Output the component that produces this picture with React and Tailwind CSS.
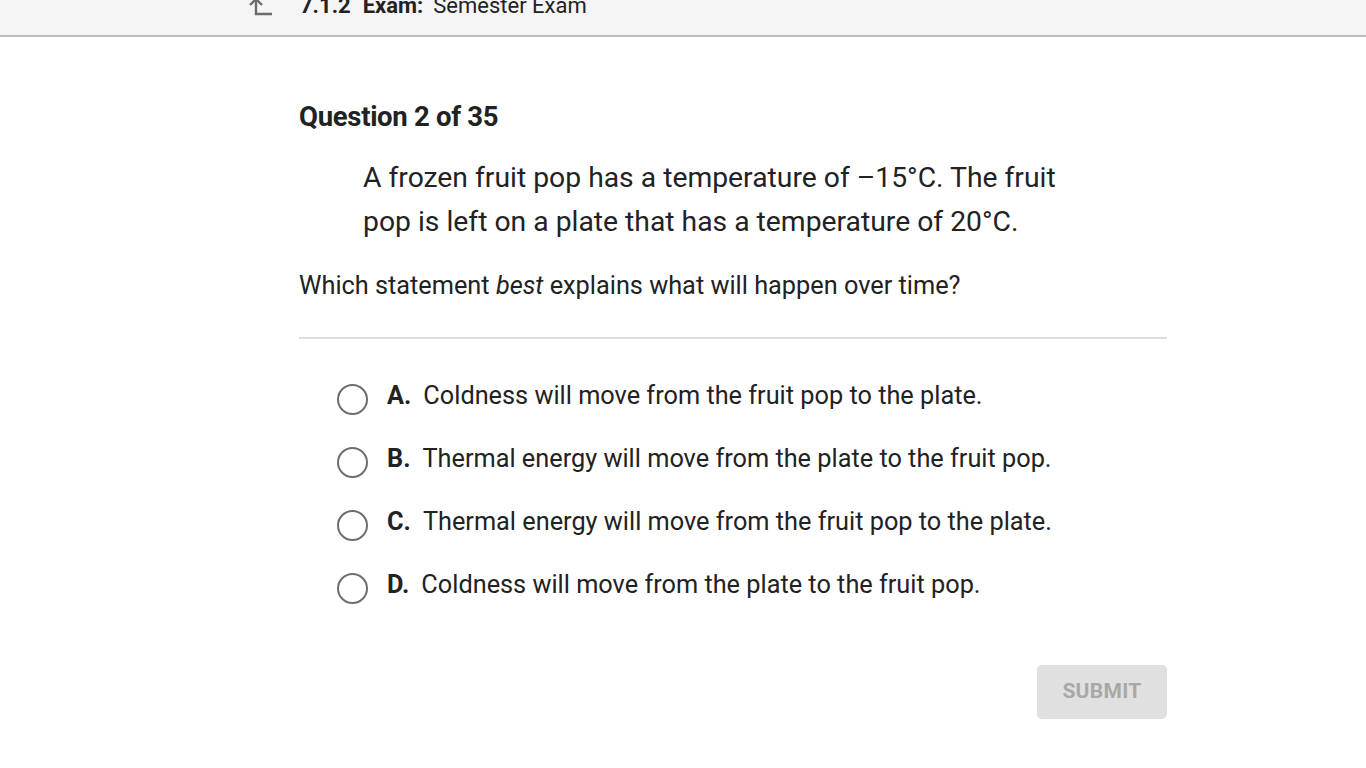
import React from 'react';

const options = [
  { letter: 'A.', text: 'Coldness will move from the fruit pop to the plate.' },
  { letter: 'B.', text: 'Thermal energy will move from the plate to the fruit pop.' },
  { letter: 'C.', text: 'Thermal energy will move from the fruit pop to the plate.' },
  { letter: 'D.', text: 'Coldness will move from the plate to the fruit pop.' },
];

function BackIcon() {
  return (
    <svg width="30" height="30" viewBox="0 0 30 30" fill="none" stroke="#6b6b6b" strokeWidth="2.4">
      <path d="M11 8V23H27" />
      <path d="M5 14L11 8L17 14" />
    </svg>
  );
}

export default function App() {
  return (
    <div className="min-h-screen bg-white text-[#222] font-['Roboto',sans-serif]">
      <header className="h-[37px] bg-[#f5f5f5] border-b-2 border-[#bdbdbd] overflow-hidden">
        <div className="flex items-center h-[40px] -mt-[14px] pl-[245px] gap-[25px]">
          <BackIcon />
          <div className="flex items-center text-[22px] leading-none">
            <span className="font-bold mr-[12px]">7.1.2</span>
            <span className="font-bold mr-[10px]">Exam:</span>
            <span>Semester Exam</span>
          </div>
        </div>
      </header>

      <main className="w-[868px] ml-[299px] pt-[62px]">
        <h1 className="text-[27.5px] font-bold leading-[36px] tracking-[-0.3px]">Question 2 of 35</h1>

        <p className="mt-[21px] ml-[64px] w-[712px] text-[28.3px] leading-[44px]">
          A frozen fruit pop has a temperature of –15°C. The fruit pop is left on a plate that has a temperature of 20°C.
        </p>

        <p className="mt-[22px] text-[25.3px] leading-[40px]">
          Which statement <em>best</em> explains what will happen over time?
        </p>

        <div className="mt-[31px] h-[2px] bg-[#dedede]" />

        <div className="mt-[37px] flex flex-col gap-[23px] pl-[38px]">
          {options.map((o) => (
            <label key={o.letter} className="flex items-center h-[40px] cursor-pointer">
              <span className="w-[31px] h-[31px] shrink-0 rounded-full border-2 border-[#6e6e6e] mt-[6px]" />
              <span className="ml-[19px] mr-[12px] text-[25.3px] font-bold">{o.letter}</span>
              <span className="text-[25.3px]">{o.text}</span>
            </label>
          ))}
        </div>

        <div className="flex justify-end mt-[60px]">
          <button className="w-[130px] h-[54px] rounded-[5px] bg-[#e0e0e0] text-[#a8a8a8] text-[21px] font-bold tracking-[0.3px]">
            SUBMIT
          </button>
        </div>
      </main>
    </div>
  );
}
